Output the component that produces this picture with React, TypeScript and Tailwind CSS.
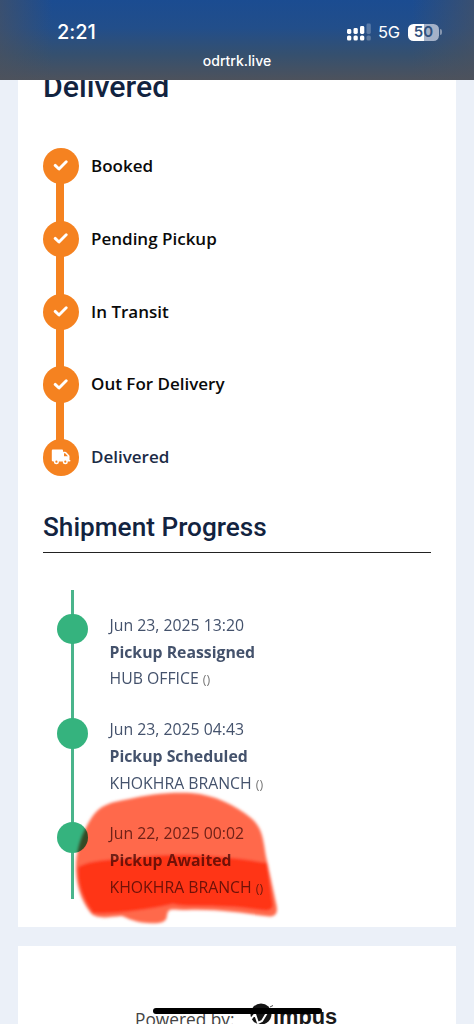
import { clsx } from 'clsx';

const steps = ['Booked', 'Pending Pickup', 'In Transit', 'Out For Delivery', 'Delivered'];

const events = [
  { date: 'Jun 23, 2025 13:20', status: 'Pickup Reassigned', location: 'HUB OFFICE' },
  { date: 'Jun 23, 2025 04:43', status: 'Pickup Scheduled', location: 'KHOKHRA BRANCH' },
  { date: 'Jun 22, 2025 00:02', status: 'Pickup Awaited', location: 'KHOKHRA BRANCH' },
];

function CheckIcon() {
  return (
    <svg width="16" height="12" viewBox="0 0 16 12" fill="none">
      <path d="M2.2 5.4 6 9 13.2 1.8" stroke="white" strokeWidth="2.9" strokeLinecap="round" strokeLinejoin="round" />
    </svg>
  );
}

function TruckIcon() {
  return (
    <svg width="20" height="16" viewBox="0 0 20 16">
      <path
        d="M2 .5h8.8c.8 0 1.2.5 1.2 1.2v1.1h2.1c.5 0 .9.2 1.2.5l2.8 3c.3.3.4.6.4 1v3.8h.3c.4 0 .7.3.7.7s-.3.7-.7.7H2c-.7 0-1.2-.5-1.2-1.2V1.7C.8 1 1.3.5 2 .5Z"
        fill="white"
      />
      <path d="M13 4.2h1.1l2.8 3H13Z" fill="#f58220" />
      <circle cx="5.4" cy="12.7" r="2.5" fill="white" />
      <circle cx="14.3" cy="12.7" r="2.5" fill="white" />
      <circle cx="5.4" cy="12.7" r="1.1" fill="#f58220" />
      <circle cx="14.3" cy="12.7" r="1.1" fill="#f58220" />
    </svg>
  );
}

function StatusBar() {
  return (
    <header className="relative z-10 h-20 shrink-0 bg-[linear-gradient(to_right,#4d525c99,transparent_11%,transparent_87%,#4d525c99),linear-gradient(to_bottom,#1b4c91,#224e8a_35%,#35506f_68%,#4d525c)] font-['Inter',sans-serif] text-white">
      <div className="flex h-[52px] items-center justify-between pt-3 pr-[32px] pl-[57px]">
        <span className="text-[20px] leading-5 font-[550] tracking-[-0.1px]">2:21</span>
        <div className="flex items-center">
          <svg width="24" height="18" viewBox="0 0 24 18" fill="white">
            <rect x="0" y="6" width="4.3" height="5" rx="1.4" />
            <rect x="6.5" y="5" width="4.3" height="6" rx="1.4" />
            <rect x="13" y="3" width="4.3" height="8" rx="1.4" />
            <rect x="19.5" y="0.5" width="4.3" height="10.5" rx="1.4" opacity="0.25" />
            <rect x="0" y="12.5" width="4.3" height="5" rx="1.6" />
            <rect x="6.5" y="12.5" width="4.3" height="5" rx="1.6" />
            <rect x="13" y="12.5" width="4.3" height="5" rx="1.6" />
            <rect x="19.5" y="12.5" width="4.3" height="5" rx="1.6" opacity="0.25" />
          </svg>
          <span className="ml-[7px] w-[24px] text-[16.5px] leading-5 font-normal tracking-[-0.3px]">5G</span>
          <div className="ml-[6px] flex items-center gap-px">
            <div className="flex h-[17px] w-[31px] items-center justify-center rounded-[5.5px] bg-[linear-gradient(to_right,white_50%,#a4b1c8_50%)] text-[15px] leading-4 font-semibold text-[#30507d]">
              50
            </div>
            <div className="h-[6px] w-[2px] rounded-r-full bg-[#8696af]" />
          </div>
        </div>
      </div>
      <p className="text-center text-[14px] leading-[18px] font-medium">odrtrk.live</p>
    </header>
  );
}

function StepList() {
  return (
    <ul className="-ml-[0.4px] mt-[45px] font-['Open_Sans',sans-serif]">
      {steps.map((step, i) => {
        const last = i === steps.length - 1;
        return (
          <li key={step} className={clsx('flex gap-3', last ? 'h-[36.4px]' : 'h-[72.8px]')}>
            <div className="flex w-[36.4px] flex-col items-center">
              <div className="flex size-[36.4px] shrink-0 items-center justify-center rounded-full bg-[#f58220]">
                {last ? <TruckIcon /> : <CheckIcon />}
              </div>
              {!last && <div className="-my-[2px] mr-px w-[8px] grow bg-[#f58220]" />}
            </div>
            <span
              className={clsx(
                'h-[36px] text-[17px] leading-[35px] font-semibold whitespace-nowrap',
                last ? 'text-[#1b2b46]' : 'text-[#0a0a0a]',
              )}
            >
              {step}
            </span>
          </li>
        );
      })}
    </ul>
  );
}

// translucent marker strokes drawn over the last event
function Highlight() {
  return (
    <svg
      className="pointer-events-none absolute top-[198px] left-[22px] mix-blend-multiply"
      width="224"
      height="150"
      viewBox="0 0 224 150"
    >
      <defs>
        <filter id="soft" x="-10%" y="-10%" width="120%" height="120%">
          <feGaussianBlur stdDeviation="1.8" />
        </filter>
      </defs>
      <g filter="url(#soft)">
        <path
          d="M11 85C10 68 15 48 27 30C35 18 46 15 64 12C82 8 102 5 126 6C150 8 170 18 186 31C199 42 198 55 202 74L211 116C214 127 210 131 200 129C176 126 154 122 122 123C106 123 104 120 102 128C102 135 97 137 82 136C66 135 60 129 56 129C44 130 31 133 25 125C15 112 12 98 11 85Z"
          fill="#ff694b"
        />
        <path
          d="M13 80C27 72 48 73 71 71C101 66 144 66 202 76L208 118C207 125 201 124 188 122C154 117 124 121 108 117C81 123 52 127 28 126C18 112 12 96 13 80Z"
          fill="#ff3518"
        />
      </g>
    </svg>
  );
}

function Timeline() {
  return (
    <div className="relative isolate mt-[36px] h-[310px] font-['Open_Sans',sans-serif] text-[#44526c]">
      <div className="absolute top-px left-[28px] -z-10 h-[309px] w-[3px] bg-[#4ab48b]" />
      <ul className="pt-[22.9px] pl-[14px]">
        {events.map((event, i) => (
          <li
            key={event.date}
            className={clsx('flex h-[104.3px] gap-[22px]', i === events.length - 1 && 'text-[#71504c]')}
          >
            <div className="mt-[2px] size-[30.5px] shrink-0 rounded-full bg-[#35b37e]" />
            <div className="text-[15.8px] leading-[26.8px] whitespace-nowrap">
              <p>{event.date}</p>
              <p className="font-bold">{event.status}</p>
              <p>
                {event.location} <span className="text-[12.5px] text-[#777]">()</span>
              </p>
            </div>
          </li>
        ))}
      </ul>
      <Highlight />
    </div>
  );
}

function Footer() {
  return (
    <footer className="mx-[18px] mt-[19px] h-[78px] overflow-hidden bg-white pt-[60px] pl-[117px]">
      <div className="flex">
        <span className="w-[114px] font-['Open_Sans',sans-serif] text-[17.3px] leading-7 whitespace-nowrap text-[#444]">
          Powered by:
        </span>
        <div className="-mt-[4px] flex">
          <svg width="24" height="24" viewBox="0 0 24 24">
            <circle cx="12" cy="12" r="10.5" fill="#141414" />
            <path d="M1 18 6 12l3 9 4-2 6-10" fill="none" stroke="white" strokeWidth="2" />
            <path d="M21 5 24 3.5" stroke="#222" strokeWidth="0.8" />
          </svg>
          <span className="font-['Liberation_Sans',sans-serif] text-[21.8px] leading-[29px] font-bold text-[#1a1a1a]">
            imbus
          </span>
        </div>
      </div>
    </footer>
  );
}

export default function App() {
  return (
    <div className="relative flex h-[1024px] w-[474px] flex-col overflow-hidden bg-[#ebf0f8]">
      <StatusBar />
      <main className="mx-[18px] h-[847px] shrink-0 bg-white px-[25px]">
        <h1 className="-mt-[10px] h-[33px] font-['Roboto',sans-serif] text-[30.3px] leading-[33px] font-medium text-[#12233f]">
          Delivered
        </h1>
        <StepList />
        <h2 className="mt-[31.4px] h-[46px] border-b-[1.5px] border-[#222] font-['Roboto',sans-serif] text-[26.2px] leading-[40px] font-medium text-[#12233f]">
          Shipment Progress
        </h2>
        <Timeline />
      </main>
      <Footer />
      {/* home indicator */}
      <div className="absolute bottom-[10px] left-[153px] h-[6px] w-[169px] rounded-full bg-black" />
    </div>
  );
}
